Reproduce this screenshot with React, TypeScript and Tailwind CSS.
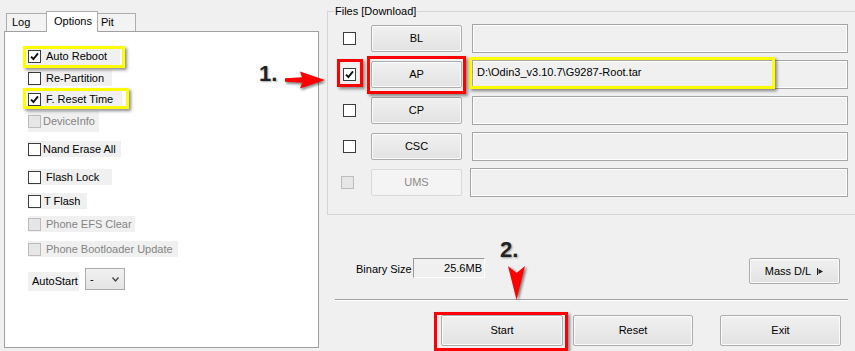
import React from 'react'
import clsx from 'clsx'

interface OptionRow {
  label: string
  checked?: boolean
  disabled?: boolean
  mt: string
  w: string
  h: string
  gap: string
}

// vertical gaps / widths read off the reference, one per row
const options: OptionRow[] = [
  { label: 'Auto Reboot', checked: true, mt: 'mt-[16px]', w: 'w-[92px]', h: 'h-[17px]', gap: 'ml-[5px]' },
  { label: 'Re-Partition', mt: 'mt-[5px]', w: 'w-[84px]', h: 'h-[16px]', gap: 'ml-[5px]' },
  { label: 'F. Reset Time', checked: true, mt: 'mt-[5px]', w: 'w-[94px]', h: 'h-[17px]', gap: 'ml-[5px]' },
  { label: 'DeviceInfo', disabled: true, mt: 'mt-[3px]', w: 'w-[71px]', h: 'h-[21px]', gap: 'ml-[2px]' },
  { label: 'Nand Erase All', mt: 'mt-[9px]', w: 'w-[93px]', h: 'h-[16px]', gap: 'ml-[2px]' },
  { label: 'Flash Lock', mt: 'mt-[12px]', w: 'w-[84px]', h: 'h-[16px]', gap: 'ml-[5px]' },
  { label: 'T Flash', mt: 'mt-[8px]', w: 'w-[59px]', h: 'h-[16px]', gap: 'ml-[3px]' },
  { label: 'Phone EFS Clear', disabled: true, mt: 'mt-[7px]', w: 'w-[107px]', h: 'h-[16px]', gap: 'ml-[5px]' },
  { label: 'Phone Bootloader Update', disabled: true, mt: 'mt-[9px]', w: 'w-[150px]', h: 'h-[16px]', gap: 'ml-[5px]' },
]

const files = [
  { name: 'BL', checked: false, path: '' },
  { name: 'AP', checked: true, path: 'D:\\Odin3_v3.10.7\\G9287-Root.tar' },
  { name: 'CP', checked: false, path: '' },
  { name: 'CSC', checked: false, path: '' },
]

function Check({ checked, disabled }: { checked?: boolean; disabled?: boolean }) {
  return (
    <span
      className={clsx(
        'w-[13px] h-[13px] border flex items-center justify-center shrink-0',
        disabled ? 'border-[#bcbcbc] bg-[#e6e6e6]' : 'border-[#3c3c3c] bg-white'
      )}
    >
      {checked && (
        <svg width="9" height="9" viewBox="0 0 9 9">
          <path d="M1 4.6 L3.4 7 L8 1.4" fill="none" stroke="#111" strokeWidth="1.9" />
        </svg>
      )}
    </span>
  )
}

function WinButton({ children, className, disabled }: { children: React.ReactNode; className?: string; disabled?: boolean }) {
  return (
    <div
      className={clsx(
        'flex items-center justify-center border rounded-[2px] shrink-0',
        disabled
          ? 'border-[#d9d9d9] bg-[#f4f4f4] text-[#8b8b8b]'
          : 'border-[#acacac] bg-linear-to-b from-[#f1f1f1] to-[#e2e2e2] text-black shadow-[inset_0_0_0_1px_#fbfbfb]',
        className
      )}
    >
      {children}
    </div>
  )
}

export default function App() {
  return (
    <div className="relative w-[855px] h-[351px] overflow-hidden bg-[#f0f0f0] flex font-['Liberation_Sans',Arial,sans-serif] text-[11px] leading-[13px] text-black">
      {/* left: options tab */}
      <div className="w-[319px] shrink-0 pl-[4px] pt-[11px] flex flex-col">
        <div className="flex items-end h-[20px] ml-[2px]">
          <div className="w-[40px] h-[18px] border-t border-l border-[#adadad] bg-[#f3f3f3] flex items-center pl-[5px]">Log</div>
          <div className="relative z-10 w-[52px] h-[21px] -mb-px border-t border-l border-r border-[#adadad] bg-white flex items-center pl-[7px] pb-[2px]">Options</div>
          <div className="w-[38px] h-[18px] border-t border-r border-[#adadad] bg-[#f3f3f3] flex items-center pl-[3px]">Pit</div>
        </div>
        <div className="w-[315px] h-[317px] border border-[#a0a0a0] bg-white pl-[23px] flex flex-col">
          {options.map((o) => (
            <div key={o.label} className={clsx('flex items-center bg-[#f0f0f0]', o.mt, o.w, o.h)}>
              <Check checked={o.checked} disabled={o.disabled} />
              <span className={clsx(o.gap, 'whitespace-nowrap', o.disabled ? 'text-[#838383]' : 'text-black')}>{o.label}</span>
            </div>
          ))}
          <div className="flex items-start mt-[11px]">
            <div className="mt-[4px] w-[51px] h-[19px] bg-[#f0f0f0] flex items-center pl-[4px]">AutoStart</div>
            <div className="ml-[6px] w-[40px] h-[22px] border border-[#acacac] bg-linear-to-b from-[#f1f1f1] to-[#e4e4e4] flex items-center justify-between pl-[4px] pr-[5px]">
              <span>-</span>
              <svg width="7" height="5" viewBox="0 0 7 5">
                <path d="M0.5 0.5 L3.5 4 L6.5 0.5" fill="none" stroke="#444" strokeWidth="1.3" />
              </svg>
            </div>
          </div>
        </div>
      </div>

      {/* right: files + actions */}
      <div className="w-[536px] shrink-0 flex flex-col">
        <fieldset className="ml-[8px] mt-[4px] w-[540px] h-[211px] border border-[#d5d5d5]">
          <legend className="ml-[6px] px-[1px] leading-[14px]">Files [Download]</legend>
          <div className="flex flex-col gap-[7px] mt-[6px] pl-[15px]">
            {files.map((f) => (
              <div key={f.name} className="flex items-center h-[29px]">
                <Check checked={f.checked} />
                <WinButton className="ml-[15px] w-[91px] h-[27px]">{f.name}</WinButton>
                <div className="ml-[10px] w-[376px] h-[29px] border border-[#a5a5a5] bg-[#f0f0f0] shadow-[inset_0_0_0_1px_#fff] pl-[4px] pt-[5px] whitespace-nowrap">
                  {f.path}
                </div>
              </div>
            ))}
            <div className="flex items-center h-[29px]">
              <span className="-ml-[2px]">
                <Check disabled />
              </span>
              <WinButton disabled className="ml-[17px] w-[91px] h-[27px]">UMS</WinButton>
              <div className="ml-[8px] w-[378px] h-[29px] border border-[#a5a5a5] bg-[#f0f0f0] shadow-[inset_0_0_0_1px_#fff]" />
            </div>
          </div>
        </fieldset>

        <div className="flex items-start mt-[43px]">
          <span className="ml-[37px] w-[56px] mt-[5px] whitespace-nowrap">Binary Size</span>
          <div className="ml-[1px] w-[72px] h-[20px] border-t border-l border-[#9a9a9a] border-b border-r border-b-white border-r-white bg-[#f0f0f0] flex items-center justify-end pr-[2px]">
            25.6MB
          </div>
          <WinButton className="ml-auto mr-[15px] w-[91px] h-[26px] gap-[6px]">
            <span>Mass D/L</span>
            <svg width="7" height="7" viewBox="0 0 7 7">
              <path d="M0.5 0 V7" stroke="#222" strokeWidth="1" />
              <path d="M1.5 1 L6 3.5 L1.5 6 Z" fill="#222" />
            </svg>
          </WinButton>
        </div>

        <div className="mt-[15px] ml-[16px] mr-[7px] h-[2px] border-t border-[#a0a0a0] border-b border-b-white" />

        <div className="flex items-start mt-[14px]">
          <WinButton className="ml-[122px] w-[122px] h-[31px]">Start</WinButton>
          <WinButton className="ml-[10px] w-[120px] h-[31px]">Reset</WinButton>
          <WinButton className="ml-[27px] w-[121px] h-[31px]">Exit</WinButton>
        </div>
      </div>

      {/* annotations drawn over the screenshot */}
      <div className="absolute left-[23px] top-[46px] w-[102px] h-[22px] border-[3px] border-[#ffff00] shadow-[2px_2px_3px_rgba(0,0,0,0.45)]" />
      <div className="absolute left-[23px] top-[88px] w-[106px] h-[21px] border-[3px] border-[#ffff00] shadow-[2px_2px_3px_rgba(0,0,0,0.45)]" />
      <div className="absolute left-[469px] top-[57px] w-[306px] h-[32px] border-[3px] border-[#ffff00] shadow-[2px_2px_3px_rgba(0,0,0,0.45)]" />

      <div className="absolute left-[337px] top-[59px] w-[26px] h-[28px] border-[3px] border-[#ff0000] shadow-[2px_2px_3px_rgba(0,0,0,0.45)]" />
      <div className="absolute left-[367px] top-[56px] w-[99px] h-[38px] border-[3px] border-[#ff0000] shadow-[2px_2px_3px_rgba(0,0,0,0.45)]" />
      <div className="absolute left-[434px] top-[312px] w-[134px] h-[39px] border-[3px] border-[#ff0000] shadow-[2px_2px_3px_rgba(0,0,0,0.45)]" />

      <span className="absolute left-[259px] top-[61px] text-[22px] leading-[26px] font-bold text-[#222] [text-shadow:1px_1px_2px_rgba(0,0,0,0.35)]">1.</span>
      <svg className="absolute left-[280px] top-[70px] drop-shadow-[1px_2px_1px_rgba(0,0,0,0.45)]" width="48" height="20" viewBox="0 0 48 20">
        <path d="M5 8.2 L22 7.2 L20 1.5 L45 10 L20 18.5 L22 12.8 L5 11.8 Z" fill="#ff0000" />
      </svg>

      <span className="absolute left-[500px] top-[237px] text-[22px] leading-[26px] font-bold text-[#222] [text-shadow:1px_1px_2px_rgba(0,0,0,0.35)]">2.</span>
      <svg className="absolute left-[508px] top-[266px] drop-shadow-[2px_1px_1px_rgba(0,0,0,0.45)]" width="18" height="35" viewBox="0 0 18 35">
        <path d="M0 0 L8.5 7 L17 0 L8.5 34 Z" fill="#ff0000" />
      </svg>
    </div>
  )
}
